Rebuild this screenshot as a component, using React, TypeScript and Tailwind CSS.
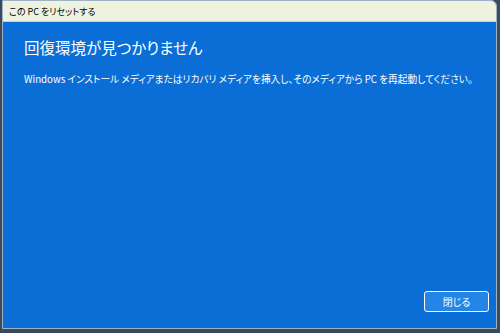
export default function App() {
  const jp = { fontFamily: '"Noto Sans CJK JP", "Noto Sans", sans-serif' }

  return (
    <div className="w-[500px] h-[333px] bg-[#3a4a5a] overflow-hidden [font-feature-settings:'palt']" style={jp}>
      <div className="flex flex-col h-[329px] ml-[2px] mr-[3px] bg-[#0a6ed6] border border-[#9fb3c8] rounded-tr-[6px] overflow-hidden">
        {/* Title bar */}
        <div className="h-[21px] shrink-0 bg-[#eef3df] border-b border-[#c9d3bb] flex items-center px-[6px]">
          <span className="text-[9px] text-black leading-none">この PC をリセットする</span>
        </div>

        {/* Body */}
        <div className="flex-1 flex flex-col pl-[21px] pr-[7px] pt-[15px] pb-[16px] text-white">
          <h1 className="text-[15.5px] leading-[20px] font-normal">回復環境が見つかりません</h1>
          <p className="mt-[15px] text-[9.7px] leading-[14px] whitespace-nowrap">
            Windows インストール メディアまたはリカバリ メディアを挿入し、そのメディアから PC を再起動してください。
          </p>

          <div className="flex-1" />

          <div className="flex justify-end">
            <button className="w-[65px] h-[21px] rounded-[3px] border border-white bg-[#2385e6] text-white text-[10px] leading-none">
              閉じる
            </button>
          </div>
        </div>
      </div>
    </div>
  )
}
